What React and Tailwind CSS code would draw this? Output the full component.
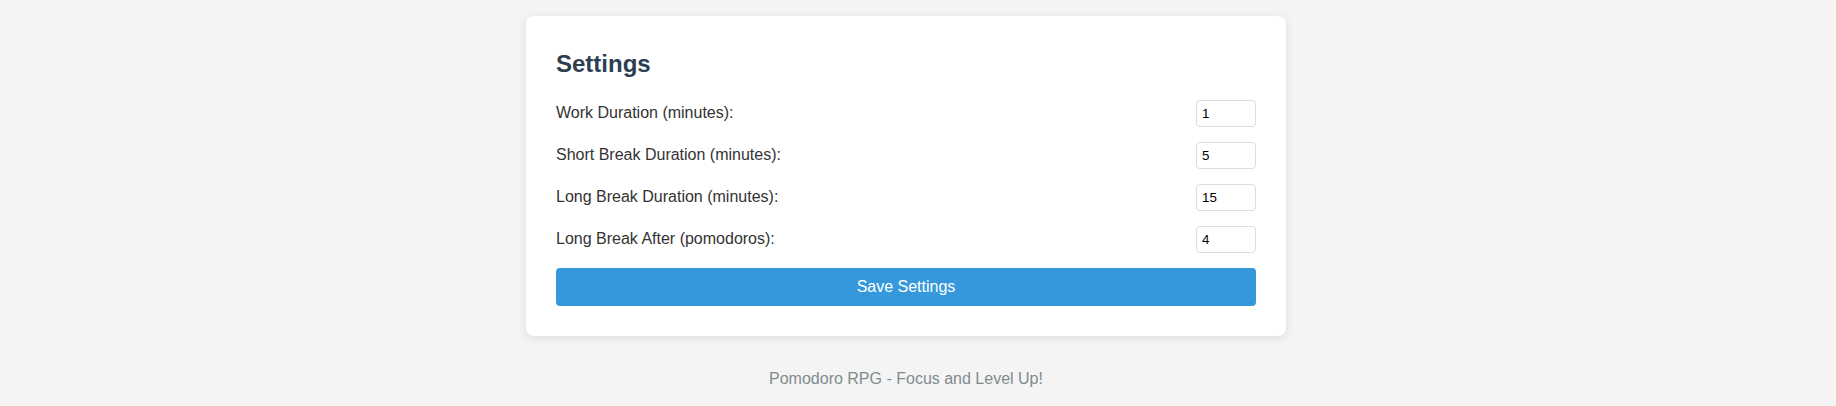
import React from "react";

const rows = [
  { label: "Work Duration (minutes):", value: "1" },
  { label: "Short Break Duration (minutes):", value: "5" },
  { label: "Long Break Duration (minutes):", value: "15" },
  { label: "Long Break After (pomodoros):", value: "4" },
];

export default function App() {
  return (
    <div className="min-h-screen bg-[#f4f4f4] font-['Liberation_Sans',Arial,sans-serif]">
      <div className="flex flex-col items-center pt-[16px] pr-[24px]">
        <div className="w-[760px] rounded-[8px] bg-white p-[30px] shadow-[0_2px_10px_rgba(0,0,0,0.1)]">
          <h2 className="mb-[18px] text-[24px] font-bold leading-[36px] text-[#2c3e50]">Settings</h2>
          {rows.map((r) => (
            <div key={r.label} className="mb-[15px] flex items-center justify-between">
              <label className="text-[16px] leading-[18px] text-[#333] -mt-[1px]">{r.label}</label>
              <input
                type="number"
                defaultValue={r.value}
                className="box-border h-[27px] w-[60px] rounded-[4px] border border-[#ddd] px-[5px] text-[13.33px] text-black outline-none [appearance:textfield] [&::-webkit-inner-spin-button]:appearance-none [&::-webkit-outer-spin-button]:appearance-none"
              />
            </div>
          ))}
          <button className="block h-[38px] w-full rounded-[4px] bg-[#3498db] text-[16px] text-white">
            Save Settings
          </button>
        </div>
        <footer className="mt-[34px] text-[16px] leading-[18px] text-[#7f8c8d]">
          Pomodoro RPG - Focus and Level Up!
        </footer>
      </div>
    </div>
  );
}
